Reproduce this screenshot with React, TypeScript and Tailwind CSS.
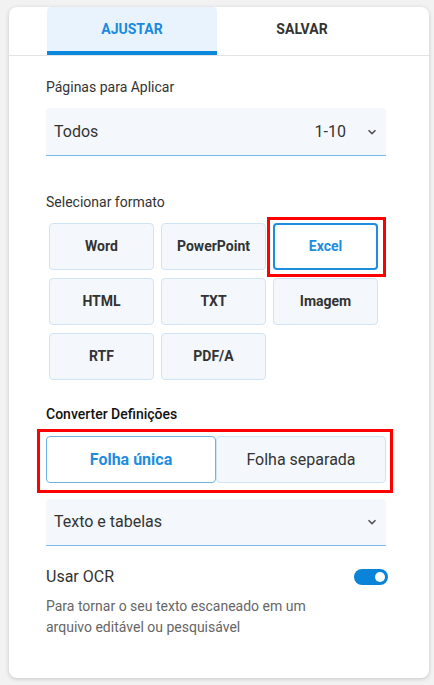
import React, { useState } from 'react';

function Chevron() {
  return (
    <svg width="10" height="6" viewBox="0 0 10 6" className="text-[#555]">
      <path d="M1.5 1.2 L5 4.6 L8.5 1.2" fill="none" stroke="currentColor" strokeWidth="1.6" />
    </svg>
  );
}

const formats = ['Word', 'PowerPoint', 'Excel', 'HTML', 'TXT', 'Imagem', 'RTF', 'PDF/A'];

function App() {
  const [tab, setTab] = useState('ajustar');
  const [format, setFormat] = useState('Excel');
  const [sheet, setSheet] = useState('unica');
  const [ocr, setOcr] = useState(true);

  return (
    <div className="min-h-[685px] bg-[#f2f2f2] px-[9px] pt-[7px] font-['Roboto',sans-serif]">
      <div className="h-[671px] w-[420px] rounded-[8px] bg-white shadow-[0_1px_4px_rgba(0,0,0,0.18)]">
        {/* tabs */}
        <div className="flex border-b border-[#e3e3e3] pl-[38px]">
          <button
            onClick={() => setTab('ajustar')}
            className={`h-[48px] w-[170px] rounded-t-[4px] border-b-[4px] text-[14px] font-bold ${tab === 'ajustar' ? 'border-[#0a88dc] bg-[#e8f3fd] text-[#1a8ae0]' : 'border-transparent text-[#333]'}`}
          >
            AJUSTAR
          </button>
          <button
            onClick={() => setTab('salvar')}
            className={`h-[48px] w-[170px] rounded-t-[4px] border-b-[4px] text-[14px] font-bold ${tab === 'salvar' ? 'border-[#0a88dc] bg-[#e8f3fd] text-[#1a8ae0]' : 'border-transparent text-[#333]'}`}
          >
            SALVAR
          </button>
        </div>

        <div className="w-[340px] pl-[37px] box-content">
          <p className="mt-[21px] text-[14px] leading-[20px] text-[#333]">Páginas para Aplicar</p>
          <div className="mt-[11px] flex h-[48px] items-center rounded-t-[4px] border-b border-[#74b9e9] bg-[#f4f8fc] pl-[8px] pr-[9px] text-[16px] text-[#333]">
            <span className="flex-1">Todos</span>
            <span className="mr-[21px]">1-10</span>
            <Chevron />
          </div>

          <p className="mt-[36px] text-[14px] leading-[20px] text-[#333]">Selecionar formato</p>
          <div className="mt-[11px] grid w-[332px] grid-cols-3 gap-x-[7px] gap-y-[8px] pl-[3px]">
            {formats.map((f) => (
              <div key={f} className="relative">
                <button
                  onClick={() => setFormat(f)}
                  className={`h-[47px] w-full rounded-[4px] text-[14px] font-bold ${format === f ? 'border-2 border-[#1d8de0] bg-white text-[#1d8de0]' : 'border border-[#cfe4f6] bg-[#f4f8fc] text-[#333]'}`}
                >
                  {f}
                </button>
                {f === 'Excel' && (
                  <div className="pointer-events-none absolute -left-[6px] -right-[8px] -top-[6px] -bottom-[7px] border-[3px] border-[#ff0000]" />
                )}
              </div>
            ))}
          </div>

          <p className="mt-[24px] text-[14px] font-medium leading-[20px] text-[#111]">Converter Definições</p>
          <div className="relative mt-[12px] flex h-[47px]">
            <button
              onClick={() => setSheet('unica')}
              className={`flex-1 rounded-[4px] text-[16px] ${sheet === 'unica' ? 'border-[1.5px] border-[#6fb3e6] bg-white font-bold text-[#1d8de0]' : 'border border-[#cfe4f6] bg-[#f4f8fc] text-[#333]'}`}
            >
              Folha única
            </button>
            <button
              onClick={() => setSheet('separada')}
              className={`flex-1 rounded-[4px] text-[16px] ${sheet === 'separada' ? 'border-[1.5px] border-[#6fb3e6] bg-white font-bold text-[#1d8de0]' : 'border border-[#cfe4f6] bg-[#f4f8fc] text-[#333]'}`}
            >
              Folha separada
            </button>
            <div className="pointer-events-none absolute -left-[9px] -right-[7px] -top-[7px] -bottom-[10px] border-[3px] border-[#ff0000]" />
          </div>

          <div className="mt-[16px] flex h-[47px] items-center rounded-t-[4px] border-b border-[#74b9e9] bg-[#f4f8fc] pl-[8px] pr-[9px] text-[16px] text-[#333]">
            <span className="flex-1">Texto e tabelas</span>
            <Chevron />
          </div>

          <div className="mt-[21px] flex items-center justify-between">
            <span className="text-[16px] leading-[20px] text-[#333]">Usar OCR</span>
            <button
              onClick={() => setOcr(!ocr)}
              className={`mr-[-2px] flex h-[16px] w-[34px] items-center rounded-full px-[3px] ${ocr ? 'justify-end bg-[#0a84d8]' : 'justify-start bg-[#bbb]'}`}
            >
              <span className="h-[10px] w-[10px] rounded-full bg-white" />
            </button>
          </div>
          <p className="mt-[9px] w-[300px] text-[14px] leading-[21px] text-[#666]">
            Para tornar o seu texto escaneado em um arquivo editável ou pesquisável
          </p>
        </div>
      </div>
    </div>
  );
}

export default App;
